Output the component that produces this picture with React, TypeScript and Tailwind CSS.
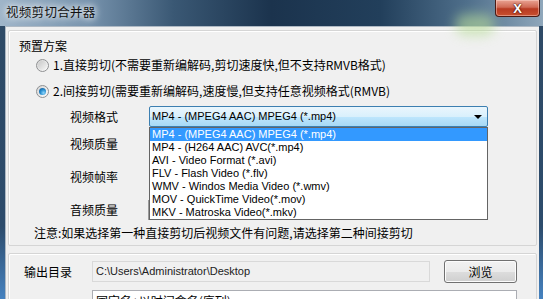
import React from "react";

const cn = '"Noto Sans CJK SC", "Noto Sans", sans-serif';
const latin = '"Liberation Sans", Arial, sans-serif';

const formats = [
  "MP4 - (MPEG4 AAC) MPEG4 (*.mp4)",
  "MP4 - (H264 AAC) AVC(*.mp4)",
  "AVI - Video Format (*.avi)",
  "FLV - Flash Video (*.flv)",
  "WMV - Windos Media Video (*.wmv)",
  "MOV - QuickTime Video(*.mov)",
  "MKV - Matroska Video(*.mkv)",
];

function Radio({ checked }: { checked?: boolean }) {
  return (
    <span className="flex h-[13px] w-[13px] items-center justify-center rounded-full border border-[#8f9092] bg-[linear-gradient(135deg,#d4d4d4,#fdfdfd)]">
      {checked ? (
        <span className="h-[7px] w-[7px] rounded-full bg-[radial-gradient(circle_at_65%_70%,#8fd6fb_0%,#2a8fd0_45%,#0b4f8c_100%)]" />
      ) : (
        <span className="h-[9px] w-[9px] rounded-full bg-[linear-gradient(135deg,#c8c8c8,#f6f6f6)]" />
      )}
    </span>
  );
}

export default function App() {
  return (
    <div
      className="flex h-[299px] w-[543px] flex-col overflow-hidden bg-[#2c4864] text-[12px] text-black"
      style={{ fontFamily: cn }}
    >
      {/* title bar */}
      <div className="relative h-[26px] shrink-0 bg-[linear-gradient(90deg,#9fb5c9_0%,#7894ae_16%,#3a5874_32%,#1b334d_50%,#223f5b_70%,#4f6f8b_86%,#8fa7bb_100%)]">
        <div className="absolute left-[455px] top-[14px] h-[22px] w-[40px] rounded-full bg-[#b9dd9a] opacity-60 blur-[6px]" />
        <div className="relative flex h-full items-center pl-[6px] pb-[1px] text-[12.5px] tracking-[0.3px] text-[#111] [text-shadow:0_0_6px_#fff,0_0_10px_#fff]">
          视频剪切合并器
        </div>
        <div className="absolute right-[3px] top-0 flex h-[17px] w-[45px] items-center justify-center rounded-b-[4px] border border-t-0 border-[#4b1a14] bg-[linear-gradient(180deg,#e9a393_0%,#d06a55_45%,#b83a22_55%,#c9502f_100%)] shadow-[inset_0_0_0_1px_rgba(255,220,210,0.45)]">
          <span
            className="text-[13px] font-bold leading-none text-white [text-shadow:0_0_2px_#3a0c06,0_0_1px_#3a0c06]"
            style={{ fontFamily: latin }}
          >
            X
          </span>
        </div>
      </div>

      {/* body */}
      <div className="flex flex-1 bg-[linear-gradient(180deg,#2e4a66_0%,#2d4c6c_70%,#4a8ccf_100%)] pl-[5px] pr-[4px]">
        <div className="flex flex-1 flex-col border-l border-t border-[#aeb9c4] bg-[#f0f0f0] px-[2px] pt-[3px]">
          {/* panel 1 */}
          <div className="flex h-[216px] shrink-0 flex-col rounded-[2px] border border-[#d5d5d5] pl-[10px] shadow-[inset_1px_1px_0_#fff]">
            <div className="mt-[7px] flex h-[16px] items-center">预置方案</div>
            <div className="mt-[3px] flex h-[16px] items-center pl-[17px]">
              <Radio />
              <span className="ml-[4px]">1.直接剪切(不需要重新编解码,剪切速度快,但不支持RMVB格式)</span>
            </div>
            <div className="mt-[10px] flex h-[16px] items-center pl-[17px]">
              <Radio checked />
              <span className="ml-[4px]">2.间接剪切(需要重新编解码,速度慢,但支持任意视频格式(RMVB)</span>
            </div>

            <div className="relative z-10 mt-[7px] flex h-[21px] items-center pl-[51px]">
              <span className="w-[79px] whitespace-nowrap">视频格式</span>
              <div className="relative h-[21px] w-[339px]">
                <div
                  className="flex h-full items-center justify-between rounded-[2px] border border-[#3c7fb1] bg-[linear-gradient(180deg,#eaf6fd_0%,#d9f0fc_50%,#bee6fd_51%,#a7d9f5_100%)] pl-[2px] pr-[5px] text-[11px]"
                  style={{ fontFamily: latin }}
                >
                  <span>{formats[0]}</span>
                  <span className="h-0 w-0 border-x-[4px] border-t-[4px] border-x-transparent border-t-black" />
                </div>
                <div
                  className="absolute left-0 top-[21px] w-[339px] border border-[#646464] bg-white text-[11px]"
                  style={{ fontFamily: latin }}
                >
                  {formats.map((f, i) => (
                    <div
                      key={f}
                      className={
                        "flex h-[13px] items-center pl-[2px] " +
                        (i === 0 ? "bg-[#3399ff] text-white" : "text-black")
                      }
                    >
                      {f}
                    </div>
                  ))}
                </div>
              </div>
            </div>

            <div className="mt-[9px] flex h-[16px] items-center pl-[51px]">视频质量</div>
            <div className="mt-[17px] flex h-[16px] items-center pl-[51px]">视频帧率</div>
            <div className="mt-[15px] flex h-[20px] items-center pl-[51px]">
              <span className="w-[78px]">音频质量</span>
              <span className="h-[20px] w-[3px] border-l border-[#9a9a9a] bg-white" />
            </div>
            <div className="mt-[5px] flex h-[16px] items-center pl-[15px]">
              注意:如果选择第一种直接剪切后视频文件有问题,请选择第二种间接剪切
            </div>
          </div>

          {/* panel 2 */}
          <div className="mt-[7px] flex flex-1 flex-col rounded-[2px] border border-[#d5d5d5] pl-[15px] shadow-[inset_1px_1px_0_#fff]">
            <div className="mt-[6px] flex h-[23px] items-center">
              <span className="w-[68px]">输出目录</span>
              <div
                className="flex h-[21px] w-[338px] items-center border border-[#d9d9d9] bg-[#f0f0f0] pl-[3px] text-[11px] text-[#222]"
                style={{ fontFamily: latin }}
              >
                C:\Users\Administrator\Desktop
              </div>
              <div className="ml-[14px] flex h-[23px] w-[73px] items-center justify-center rounded-[3px] border border-[#707070] bg-[linear-gradient(180deg,#f2f2f2_0%,#ebebeb_50%,#dddddd_51%,#cfcfcf_100%)] shadow-[inset_0_0_0_1px_#fcfcfc]">
                浏览
              </div>
            </div>
            <div className="mt-[7px] flex h-[21px] items-start">
              <span className="w-[68px]" />
              <div className="flex h-[21px] w-[425px] items-center border border-[#abadb3] bg-white pl-[3px]">
                固定名+以时间命名(序列)
              </div>
            </div>
          </div>
        </div>
      </div>
    </div>
  );
}
